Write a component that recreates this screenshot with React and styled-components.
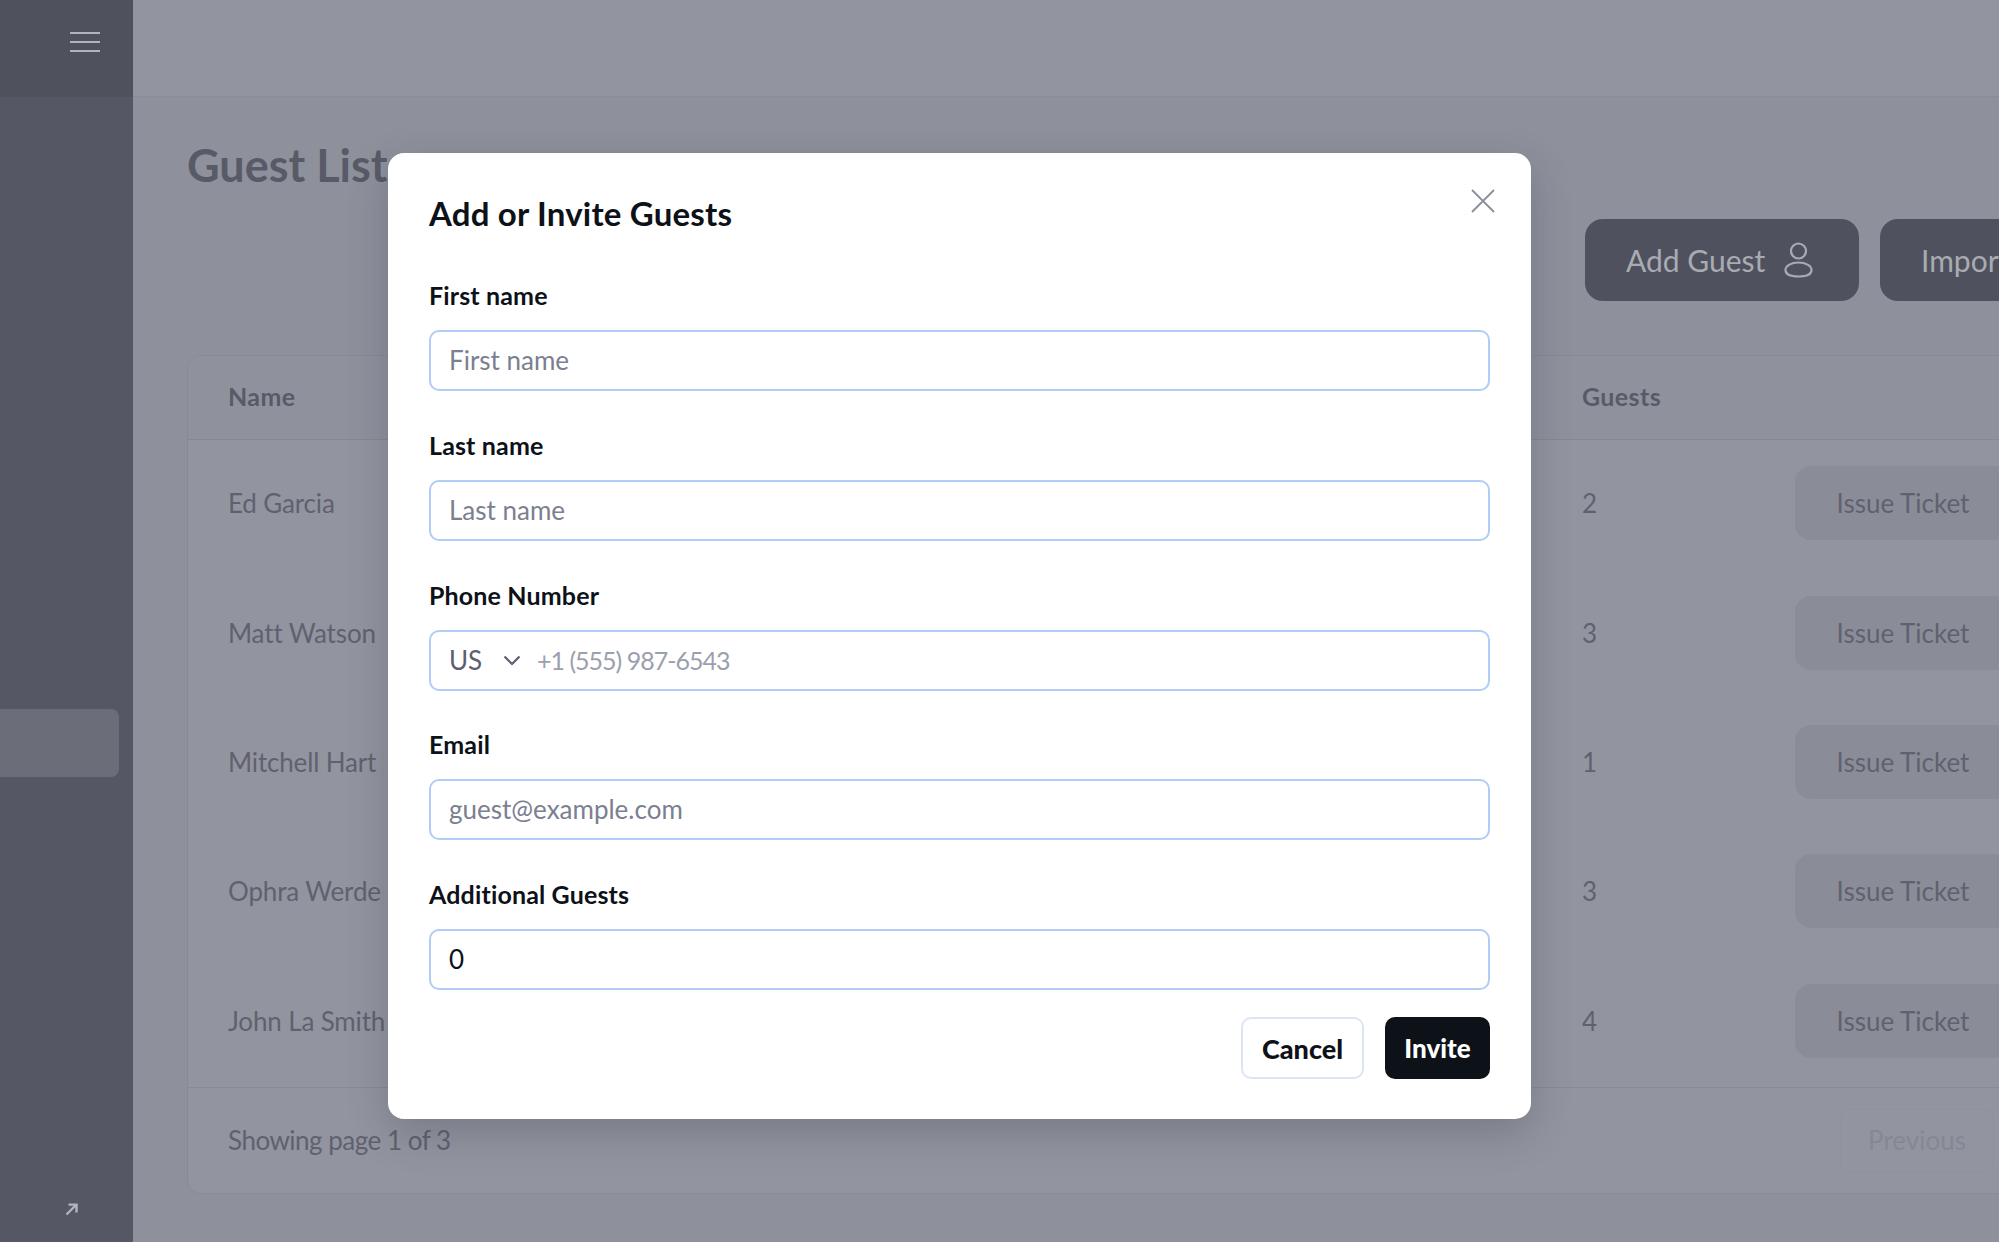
import React from 'react'
import styled, { createGlobalStyle } from 'styled-components'

const FONT = `Lato, "Open Sans", "Liberation Sans", sans-serif`

const guests = [
    { name: 'Ed Garcia', count: 2 },
    { name: 'Matt Watson', count: 3 },
    { name: 'Mitchell Hart', count: 1 },
    { name: 'Ophra Werde', count: 3 },
    { name: 'John La Smith', count: 4 },
]

const fields = [
    { label: 'First name', placeholder: 'First name' },
    { label: 'Last name', placeholder: 'Last name' },
    { label: 'Phone Number', phone: true },
    { label: 'Email', placeholder: 'guest@example.com' },
    { label: 'Additional Guests', value: '0' },
]

const App = () => {
    return (
        <Page>
            <GlobalStyle />
            <Sidebar>
                <SidebarTop>
                    <svg width="30" height="20" viewBox="0 0 30 20" fill="none" stroke="#b2b4bc" strokeWidth="2">
                        <path d="M0 1h30M0 10h30M0 19h30" />
                    </svg>
                </SidebarTop>
                <SidebarActive />
                <SidebarBottom>
                    <svg width="13" height="13" viewBox="0 0 13 13" fill="none" stroke="#b2b4bc" strokeWidth="2.4">
                        <path d="M1.5 11.5L11 2M3.5 1.6h8v8" />
                    </svg>
                </SidebarBottom>
            </Sidebar>
            <Main>
                <TopBar />
                <Content>
                    <Title>Guest List</Title>
                    <Actions>
                        <ActionButton>
                            Add Guest
                            <svg width="29" height="36" viewBox="0 0 29 36" fill="none" stroke="#a9abb3" strokeWidth="2.2">
                                <circle cx="14.5" cy="9" r="7.5" />
                                <path d="M14.5 20.5c-7 0-13 3.2-13 7.5 0 4 4 6.5 13 6.5s13-2.500 13-6.500c0-4.300-6-7.500-13-7.500z" />
                            </svg>
                        </ActionButton>
                        <ActionButton $wide>Import Guests</ActionButton>
                    </Actions>
                    <Table>
                        <HeadRow>
                            <span>Name</span>
                            <span>Guests</span>
                        </HeadRow>
                        {guests.map((guest) => (
                            <Row key={guest.name}>
                                <span>{guest.name}</span>
                                <span>{guest.count}</span>
                                <TicketButton>Issue Ticket</TicketButton>
                            </Row>
                        ))}
                        <TableFooter>
                            <FooterText>Showing page 1 of 3</FooterText>
                            <Pager>
                                <PagerButton $width={154}>Previous</PagerButton>
                                <PagerButton $width={112}>Next</PagerButton>
                            </Pager>
                        </TableFooter>
                    </Table>
                </Content>
            </Main>
            <Modal>
                <CloseButton>
                    <svg width="24" height="24" viewBox="0 0 24 24" fill="none" stroke="#8b8f9c" strokeWidth="1.8">
                        <path d="M1 1l22 22M23 1L1 23" />
                    </svg>
                </CloseButton>
                <ModalTitle>Add or Invite Guests</ModalTitle>
                {fields.map((field) => (
                    <Field key={field.label}>
                        <Label>{field.label}</Label>
                        {field.phone ? (
                            <PhoneBox>
                                <Country>US</Country>
                                <svg width="18" height="11" viewBox="0 0 18 11" fill="none" stroke="#5b6070" strokeWidth="2.2">
                                    <path d="M1.500 1.500L9 9l7.500-7.500" />
                                </svg>
                                <PhoneInput placeholder="+1 (555) 987-6543" />
                            </PhoneBox>
                        ) : (
                            <Input placeholder={field.placeholder} defaultValue={field.value} />
                        )}
                    </Field>
                ))}
                <ModalActions>
                    <CancelButton>Cancel</CancelButton>
                    <InviteButton>Invite</InviteButton>
                </ModalActions>
            </Modal>
        </Page>
    )
}

export default App

const GlobalStyle = createGlobalStyle`
    html, body {
        margin: 0;
        padding: 0;
        height: 100%;
        overflow: hidden;
    }
    * {
        box-sizing: border-box;
    }
    input, button {
        font-family: ${FONT};
    }
`

const Page = styled.div`
    position: relative;
    display: flex;
    width: 1999px;
    height: 1242px;
    overflow: hidden;
    background-color: #8e919c;
    font-family: ${FONT};
`

const Sidebar = styled.div`
    flex: 0 0 133px;
    display: flex;
    flex-direction: column;
    background-color: #555864;
`

const SidebarTop = styled.div`
    height: 97px;
    display: flex;
    align-items: center;
    padding: 0 0 13px 70px;
    background-color: #4f525d;
`

const SidebarActive = styled.div`
    width: 119px;
    height: 68px;
    margin-top: 612px;
    background-color: #6b6e79;
    border-radius: 0 8px 8px 0;
`

const SidebarBottom = styled.div`
    margin-top: auto;
    padding: 0 0 26px 65px;
    line-height: 0;
`

const Main = styled.div`
    flex: 1;
    min-width: 0;
    display: flex;
    flex-direction: column;
`

const TopBar = styled.div`
    flex: 0 0 97px;
    background-color: #92959f;
    border-bottom: 1px solid #8a8d98;
`

const Content = styled.div`
    width: 2031px;
    padding: 40px 0 0 54px;
`

const Title = styled.div`
    height: 56px;
    line-height: 56px;
    font-size: 45px;
    font-weight: 700;
    color: #585b67;
`

const Actions = styled.div`
    display: flex;
    justify-content: flex-end;
    gap: 21px;
    margin-top: 26px;
`

const ActionButton = styled.div`
    flex: 0 0 ${(p) => (p.$wide ? '284px' : '274px')};
    height: 82px;
    display: flex;
    align-items: center;
    gap: 19px;
    padding: 0 41px;
    border-radius: 18px;
    background-color: #4f525e;
    font-size: 30px;
    white-space: nowrap;
    color: #a9abb3;
`

const Table = styled.div`
    margin-top: 54px;
    border: 1px solid #888b96;
    border-radius: 14px;
    overflow: hidden;
    background-color: #92959f;
    font-size: 26px;
    color: #5f626e;
`

const HeadRow = styled.div`
    height: 84px;
    display: grid;
    grid-template-columns: 1354px 1fr;
    align-items: center;
    padding: 0 0 4px 40px;
    background-color: #8f929d;
    border-bottom: 1px solid #868994;
    font-size: 25px;
    font-weight: 700;
    letter-spacing: 0.4px;
    color: #585b67;
`

const Row = styled.div`
    height: 129.4px;
    display: grid;
    grid-template-columns: 1354px 213px 216px;
    align-items: center;
    padding: 0 0 3px 40px;
    letter-spacing: -0.15px;
`

const TicketButton = styled.div`
    height: 74px;
    display: flex;
    align-items: center;
    justify-content: center;
    border-radius: 16px;
    background-color: #8a8d98;
    letter-spacing: 0;
`

const TableFooter = styled.div`
    height: 106px;
    display: flex;
    align-items: center;
    justify-content: space-between;
    padding: 0 41px 0 40px;
    border-top: 1px solid #888b96;
`

const FooterText = styled.span`
    letter-spacing: -0.5px;
`

const Pager = styled.div`
    display: flex;
    gap: 16px;
`

const PagerButton = styled.div`
    width: ${(p) => p.$width}px;
    height: 63px;
    display: flex;
    align-items: center;
    justify-content: center;
    border: 1px solid #8f929d;
    border-radius: 10px;
    color: #858894;
`

const Modal = styled.div`
    position: absolute;
    left: 388px;
    top: 153px;
    width: 1143px;
    height: 966px;
    padding: 41px;
    background-color: #fff;
    border-radius: 16px;
    box-shadow: 0 14px 40px rgba(30, 34, 50, 0.22);
`

const CloseButton = styled.div`
    position: absolute;
    top: 36px;
    right: 36px;
    line-height: 0;
`

const ModalTitle = styled.div`
    height: 38px;
    line-height: 38px;
    margin-bottom: 48px;
    font-size: 33px;
    font-weight: 700;
    letter-spacing: 0.2px;
    color: #0d1118;
`

const Field = styled.div`
    margin-bottom: 38.75px;
    &:nth-last-child(2) {
        margin-bottom: 27px;
    }
`

const Label = styled.div`
    height: 30px;
    line-height: 30px;
    margin-bottom: 20px;
    font-size: 25px;
    font-weight: 700;
    letter-spacing: 0.15px;
    color: #0d1118;
`

const Input = styled.input`
    display: block;
    width: 100%;
    height: 61px;
    padding: 0 18px 1px;
    border: 2px solid #b0ccf7;
    border-radius: 10px;
    outline: none;
    font-size: 26px;
    color: #0d1118;
    &::placeholder {
        color: #7b8090;
        opacity: 1;
    }
`

const PhoneBox = styled.div`
    height: 61px;
    display: flex;
    align-items: center;
    padding: 0 18px;
    border: 2px solid #b0ccf7;
    border-radius: 10px;
`

const Country = styled.span`
    width: 54px;
    font-size: 26px;
    color: #5b6070;
`

const PhoneInput = styled.input`
    flex: 1;
    margin-left: 16px;
    padding: 0;
    border: 0;
    outline: none;
    font-size: 25px;
    letter-spacing: -1px;
    &::placeholder {
        color: #9aa0ad;
        opacity: 1;
    }
`

const ModalActions = styled.div`
    display: flex;
    justify-content: flex-end;
    gap: 21px;
`

const CancelButton = styled.div`
    width: 123px;
    height: 62px;
    display: flex;
    align-items: center;
    justify-content: center;
    border: 2px solid #dbe5f5;
    border-radius: 10px;
    font-size: 27px;
    font-weight: 900;
    color: #0d1118;
`

const InviteButton = styled.div`
    width: 105px;
    height: 62px;
    display: flex;
    align-items: center;
    justify-content: center;
    border-radius: 10px;
    background-color: #0d1118;
    font-size: 26px;
    font-weight: 900;
    color: #fff;
`
